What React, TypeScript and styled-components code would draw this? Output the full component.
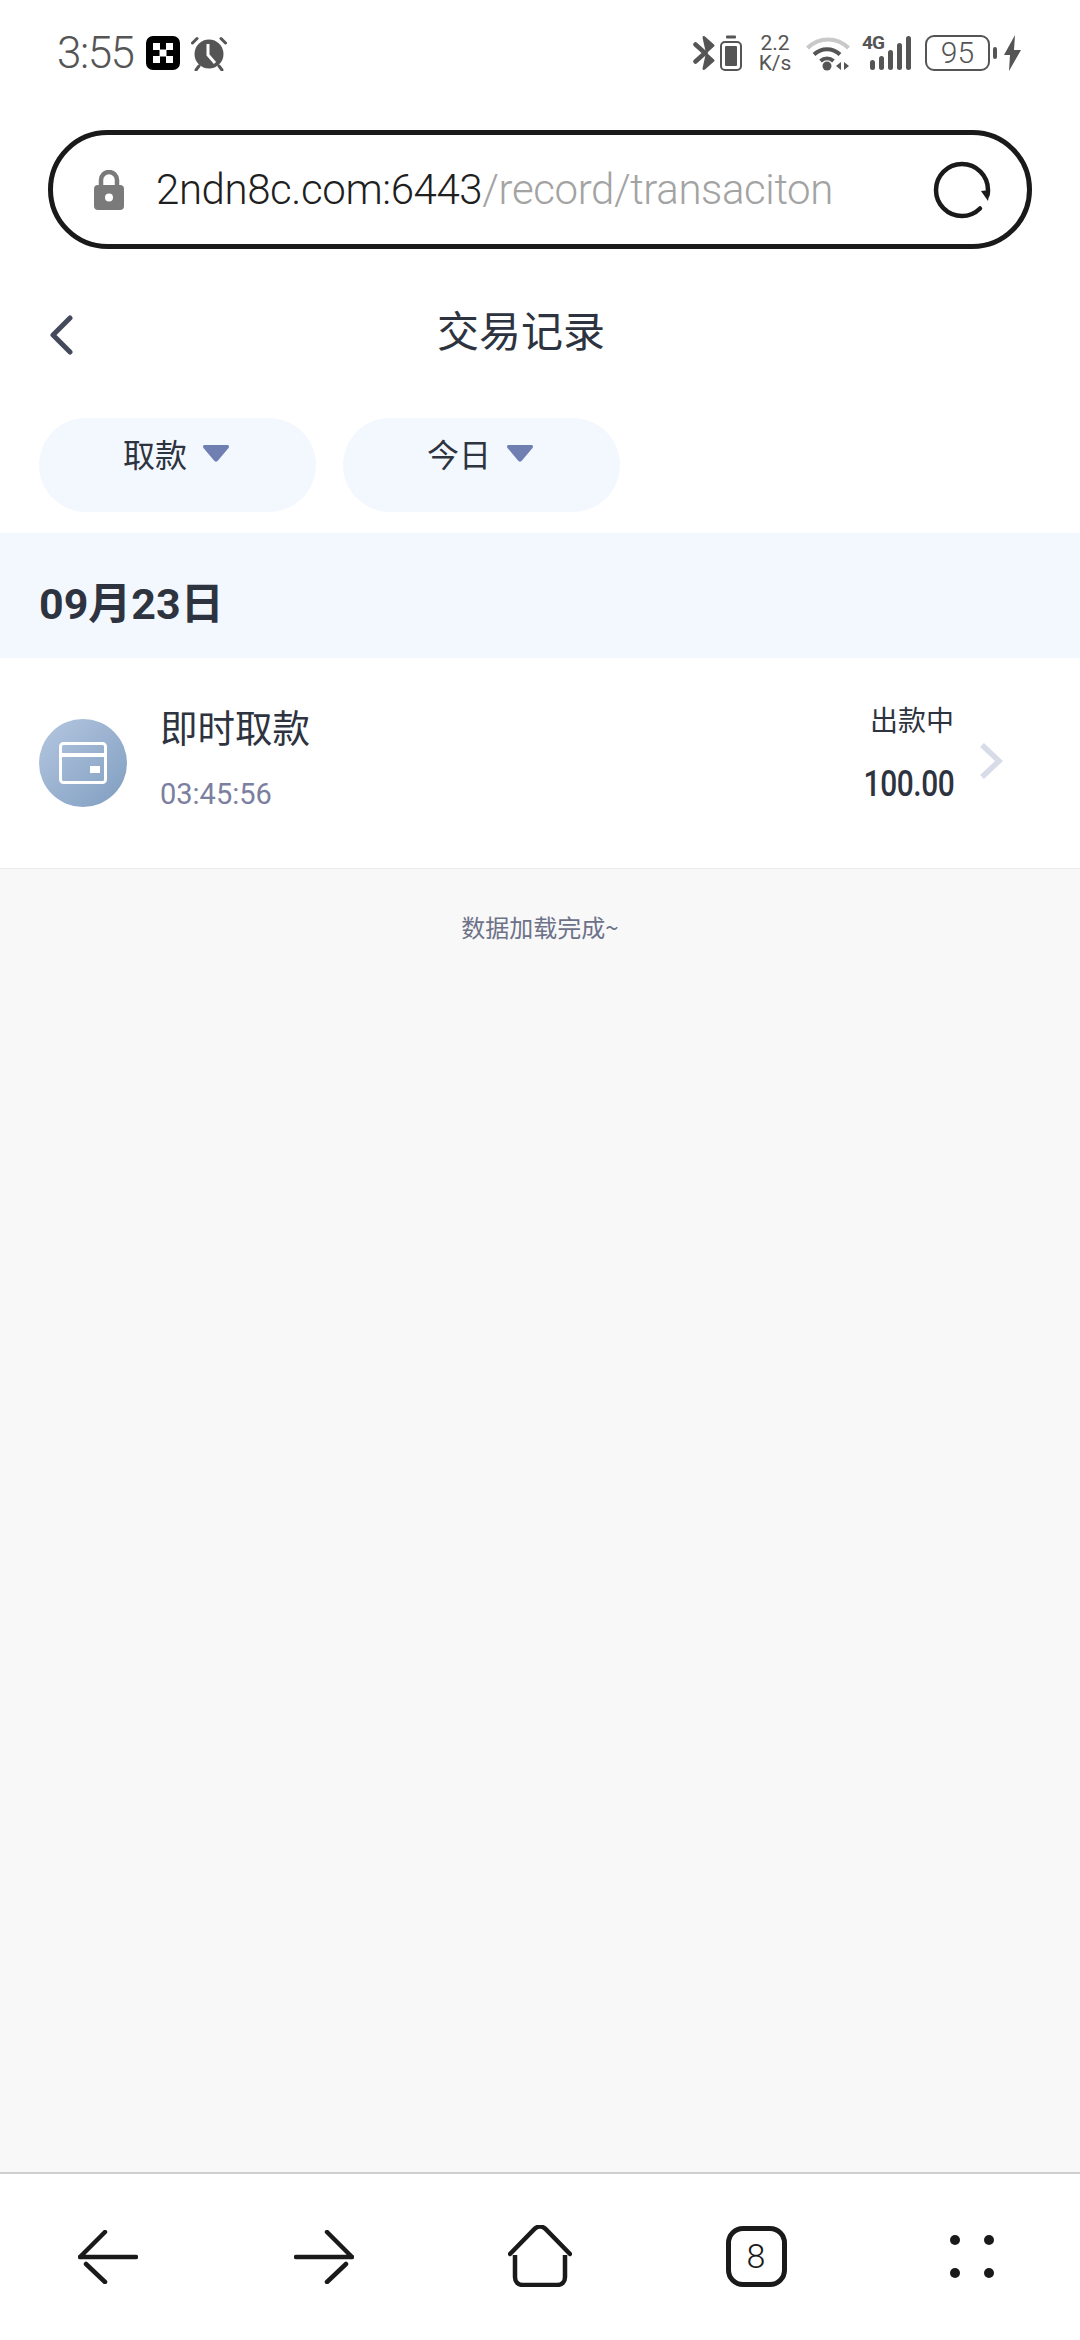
import React from 'react';
import styled, { createGlobalStyle } from 'styled-components';

const GlobalStyle = createGlobalStyle`
  html, body {
    margin: 0;
    padding: 0;
    background: #ffffff;
  }
  * {
    box-sizing: border-box;
  }
`;

const SANS = `Roboto, "Noto Sans CJK SC", sans-serif`;
const CJK = `"Noto Sans CJK SC", Roboto, sans-serif`;
const INK = '#2e3340';
const BAND = '#f3f8fe';

const Page = styled.div`
  width: 1080px;
  height: 2340px;
  display: flex;
  flex-direction: column;
  background: #ffffff;
  font-family: ${SANS};
  overflow: hidden;
`;

/* status bar */
const StatusBar = styled.div`
  height: 130px;
  padding: 0 59px 24px 57px;
  display: flex;
  align-items: center;
  justify-content: space-between;
  color: #555555;
`;

const StatusGroup = styled.div`
  display: flex;
  align-items: center;
`;

const Clock = styled.span`
  font-size: 44px;
  font-weight: 300;
  letter-spacing: -1.5px;
  line-height: 44px;
  margin-right: 13px;
`;

const Speed = styled.div`
  width: 36px;
  margin: 0 13px 0 15px;
  font-size: 21px;
  line-height: 20px;
  font-weight: 400;
  text-align: center;
  white-space: nowrap;
`;

const SignalBox = styled.div`
  position: relative;
  width: 50px;
  height: 36px;
  margin-left: 12px;
`;

const NetworkLabel = styled.span`
  position: absolute;
  left: 0;
  top: -3px;
  font-size: 19px;
  line-height: 22px;
  font-weight: 700;
  letter-spacing: -1px;
`;

const BatteryBox = styled.div`
  width: 65px;
  height: 36px;
  margin-left: 13px;
  border: 2.5px solid #555555;
  border-radius: 9px;
  display: flex;
  align-items: center;
  justify-content: center;
  font-size: 30px;
  font-weight: 300;
  line-height: 30px;
`;

const BatteryNub = styled.div`
  width: 4px;
  height: 12px;
  margin-left: 3px;
  border-radius: 2px;
  background: #555555;
`;

/* address bar */
const AddressBar = styled.div`
  height: 119px;
  margin: 0 48px 0 48px;
  padding: 0 35px 0 41px;
  border: 5px solid #1a1a1a;
  border-radius: 60px;
  display: flex;
  align-items: center;
`;

const Url = styled.div`
  flex: 1;
  margin-left: 32px;
  font-size: 42px;
  font-weight: 300;
  color: #1f1f1f;
  white-space: nowrap;
  line-height: 50px;
  letter-spacing: -0.4px;
`;

const UrlPath = styled.span`
  color: #a3a3a3;
`;

/* page header */
const TitleBar = styled.div`
  height: 169px;
  padding: 0 0 0 49px;
  display: flex;
  align-items: center;
  gap: 364px;
`;

const BackSlot = styled.div`
  display: flex;
  margin-top: 3px;
`;

const Title = styled.h1`
  margin: 0 0 10px;
  font-family: ${CJK};
  font-size: 42px;
  line-height: 50px;
  font-weight: 400;
  color: ${INK};
`;

const Filters = styled.div`
  display: flex;
  gap: 27px;
  padding: 0 0 0 39px;
  margin-bottom: 21px;
`;

const Pill = styled.div`
  width: 277px;
  height: 94px;
  border-radius: 47px;
  background: ${BAND};
  padding: 12px 3px 0 0;
  display: flex;
  align-items: flex-start;
  justify-content: center;
  gap: 16px;
  font-family: ${CJK};
  font-size: 32px;
  line-height: 46px;
  color: ${INK};
`;

const Caret = styled.svg`
  width: 26px;
  height: 17px;
  margin-top: 15px;
`;

const DateBand = styled.div`
  height: 125px;
  padding: 9px 0 0 39px;
  display: flex;
  align-items: center;
  background: ${BAND};
  font-family: ${SANS};
  font-size: 43px;
  font-weight: 700;
  color: ${INK};
`;

/* record row */
const Row = styled.div`
  height: 211px;
  padding: 0 77px 0 39px;
  display: flex;
  align-items: center;
  background: #ffffff;
  border-bottom: 1px solid #ececee;
`;

const Badge = styled.div`
  width: 88px;
  height: 88px;
  border-radius: 50%;
  margin-right: 33px;
  display: flex;
  align-items: center;
  justify-content: center;
  background: linear-gradient(135deg, #b5c7e0 0%, #7f9dc0 100%);
`;

const RowMain = styled.div`
  flex: 1;
  display: flex;
  flex-direction: column;
  gap: 26px;
  margin-bottom: 14px;
`;

const RowTitle = styled.div`
  font-family: ${CJK};
  font-size: 37.5px;
  line-height: 50px;
  color: ${INK};
`;

const RowTime = styled.div`
  font-size: 29px;
  line-height: 34px;
  color: #7b80a0;
`;

const RowSide = styled.div`
  display: flex;
  flex-direction: column;
  align-items: flex-end;
  gap: 25px;
  margin: 0 25px 24px 0;
`;

const RowStatus = styled.div`
  font-family: ${CJK};
  font-size: 28px;
  line-height: 40px;
  color: ${INK};
`;

const RowAmount = styled.div`
  font-size: 36px;
  line-height: 40px;
  font-weight: 500;
  letter-spacing: -0.5px;
  color: ${INK};
  transform: scaleX(0.83);
  transform-origin: right center;
`;

const RowChevron = styled.div`
  display: flex;
  margin-top: -4px;
`;

/* lower part */
const Content = styled.div`
  flex: 1;
  background: #f8f8f9;
  padding-top: 40px;
  text-align: center;
  font-family: ${CJK};
  font-size: 24px;
  line-height: 36px;
  color: #6d7288;
`;

const BottomNav = styled.div`
  height: 168px;
  display: grid;
  grid-template-columns: repeat(5, 1fr);
  align-items: center;
  justify-items: center;
  padding-bottom: 2px;
  background: #ffffff;
  border-top: 2px solid #cfcfcf;
`;

const TabCount = styled.div`
  width: 61px;
  height: 61px;
  border: 5px solid #1a1a1a;
  border-radius: 17px;
  display: flex;
  align-items: center;
  justify-content: center;
  font-size: 34px;
  font-weight: 300;
  color: #1a1a1a;
`;

const NavDots = styled.div`
  display: grid;
  grid-template-columns: repeat(2, 10px);
  gap: 23px 24px;
`;

const NavDot = styled.span`
  width: 10px;
  height: 10px;
  border-radius: 50%;
  background: #1a1a1a;
`;

const DiceIcon = () => (
  <svg width="34" height="34" viewBox="0 0 34 34" style={{ marginRight: 11 }}>
    <rect width="34" height="34" rx="7" fill="#000" />
    <g fill="#fff">
      <rect x="7" y="7" width="7" height="7" />
      <rect x="20" y="7" width="7" height="7" />
      <rect x="13.5" y="13.5" width="7" height="7" />
      <rect x="7" y="20" width="7" height="7" />
      <rect x="20" y="20" width="7" height="7" />
    </g>
  </svg>
);

const AlarmIcon = () => (
  <svg width="36" height="36" viewBox="0 0 36 36">
    <circle cx="18" cy="19" r="14.5" fill="#555" />
    <path d="M6 3.5 1.5 8M30 3.5 34.500 8M5 35l3-4M31 35l-3-4" stroke="#555" strokeWidth="3" strokeLinecap="round" />
    <path d="M17 9v11l7 8" fill="none" stroke="#fff" strokeWidth="3" />
  </svg>
);

const BluetoothIcon = () => (
  <svg width="23" height="36" viewBox="0 0 23 36">
    <path d="M2.500 9.500 12 18l-9.500 8.500" fill="none" stroke="#555" strokeWidth="4.500" strokeLinecap="round" />
    <path d="M11 2.500 20 10.500 14 16zM14 20l6 5.500-9 8z" fill="#555" stroke="#555" strokeWidth="3" strokeLinejoin="round" />
  </svg>
);

const PowerSaveIcon = () => (
  <svg width="22" height="36" viewBox="0 0 22 36" style={{ marginLeft: 4 }}>
    <rect x="6" y="0.500" width="10" height="3" rx="1" fill="#555" />
    <rect x="1" y="7" width="20" height="28" rx="4" fill="none" stroke="#555" strokeWidth="2" />
    <rect x="5" y="11" width="12" height="20" rx="1" fill="#555" />
  </svg>
);

const WifiIcon = () => (
  <svg width="44" height="36" viewBox="0 0 44 36">
    <path d="M1.500 13C13 1.500 31 1.500 42.500 13" fill="none" stroke="#c9c9c9" strokeWidth="4" />
    <path d="M8 19.500C15.500 12.500 26.500 12.500 34 19.500M14.500 26c4-3.500 9-3.500 13 0" fill="none" stroke="#555" strokeWidth="4" />
    <circle cx="21" cy="31" r="4.500" fill="#555" />
    <path d="M35 27v8l-5-4zM38 27v8l5-4z" fill="#555" />
  </svg>
);

const SignalBars = () => (
  <svg width="50" height="36" viewBox="0 0 50 36">
    <g fill="#555">
      <rect x="8" y="25" width="5" height="10" rx="2.500" />
      <rect x="17" y="21" width="5" height="14" rx="2.500" />
      <rect x="26" y="15" width="5" height="20" rx="2.500" />
      <rect x="35" y="8" width="5" height="27" rx="2.500" />
      <rect x="44" y="1" width="5" height="34" rx="2.500" />
    </g>
  </svg>
);

const BoltIcon = () => (
  <svg width="17" height="36" viewBox="0 0 17 36" style={{ marginLeft: 7 }}>
    <path d="M11 0 0 20h6l-1 16L17 15h-7z" fill="#555" />
  </svg>
);

const LockIcon = () => (
  <svg width="30" height="40" viewBox="0 0 30 40">
    <path d="M7 18v-8a8 8 0 0 1 16 0v8" fill="none" stroke="#7a7a7a" strokeWidth="4.500" />
    <rect y="15" width="30" height="25" rx="4" fill="#7a7a7a" />
    <circle cx="15" cy="27.500" r="4" fill="#fff" />
  </svg>
);

const ReloadIcon = () => (
  <svg width="60" height="60" viewBox="0 0 60 60">
    <path d="M48 48.500C43 53.500 37 56 30 56 15.600 56 4 44.400 4 30S15.600 4 30 4s26 11.600 26 26c0 2-.2 3.500-.5 5" fill="none" stroke="#1a1a1a" strokeWidth="4.500" strokeLinecap="round" />
    <path d="M49 31l9-1-2 11z" fill="#1a1a1a" />
  </svg>
);

const BackIcon = () => (
  <svg width="24" height="40" viewBox="0 0 24 40">
    <path d="M21 3 4 20l17 17" fill="none" stroke="#444a5c" strokeWidth="5" strokeLinecap="round" strokeLinejoin="round" />
  </svg>
);

const CardIcon = () => (
  <svg width="48" height="42" viewBox="0 0 48 42">
    <rect x="1.500" y="1.500" width="45" height="39" rx="3" fill="none" stroke="#fff" strokeWidth="3" />
    <rect x="2" y="11" width="44" height="4" fill="#fff" />
    <rect x="31" y="24" width="10" height="7" fill="#fff" />
  </svg>
);

const ChevronIcon = () => (
  <svg width="24" height="38" viewBox="0 0 24 38">
    <path d="M3 3l17 16L3 35" fill="none" stroke="#d8dbe8" strokeWidth="5.500" />
  </svg>
);

const NavArrow = ({ flip }: { flip?: boolean }) => (
  <svg width="60" height="54" viewBox="0 0 60 54" style={{ transform: flip ? 'scaleX(-1)' : undefined, marginTop: 2 }}>
    <path d="M2 27H58M27 2 2 27M8 34l19 18" fill="none" stroke="#1a1a1a" strokeWidth="4.500" strokeLinecap="round" />
  </svg>
);

const HomeIcon = () => (
  <svg width="64" height="62" viewBox="0 0 64 62">
    <path d="M2 29 27 3.500c3-2.500 7-2.500 10 0L62 29" fill="none" stroke="#1a1a1a" strokeWidth="4.500" strokeLinecap="round" />
    <path d="M7 30v22c0 5 3 8 8 8h34c5 0 8-3 8-8V30" fill="none" stroke="#1a1a1a" strokeWidth="4.500" />
  </svg>
);

const FILTERS = ['取款', '今日'];

const App: React.FC = () => {
  return (
    <Page>
      <GlobalStyle />
      <StatusBar>
        <StatusGroup>
          <Clock>3:55</Clock>
          <DiceIcon />
          <AlarmIcon />
        </StatusGroup>
        <StatusGroup>
          <BluetoothIcon />
          <PowerSaveIcon />
          <Speed>
            2.2
            <br />
            K/s
          </Speed>
          <WifiIcon />
          <SignalBox>
            <SignalBars />
            <NetworkLabel>4G</NetworkLabel>
          </SignalBox>
          <BatteryBox>95</BatteryBox>
          <BatteryNub />
          <BoltIcon />
        </StatusGroup>
      </StatusBar>

      <AddressBar>
        <LockIcon />
        <Url>
          2ndn8c.com:6443<UrlPath>/record/transaciton</UrlPath>
        </Url>
        <ReloadIcon />
      </AddressBar>

      <TitleBar>
        <BackSlot>
          <BackIcon />
        </BackSlot>
        <Title>交易记录</Title>
      </TitleBar>

      <Filters>
        {FILTERS.map((label) => (
          <Pill key={label}>
            {label}
            <Caret viewBox="0 0 26 17">
              <path d="M2 0h22c2 0 2.500 1.500 1.500 3L15 15.500c-1 1.500-3 1.500-4 0L.5 3C-.5 1.500 0 0 2 0z" fill="#6f7fb2" />
            </Caret>
          </Pill>
        ))}
      </Filters>

      <DateBand>09月23日</DateBand>

      <Row>
        <Badge>
          <CardIcon />
        </Badge>
        <RowMain>
          <RowTitle>即时取款</RowTitle>
          <RowTime>03:45:56</RowTime>
        </RowMain>
        <RowSide>
          <RowStatus>出款中</RowStatus>
          <RowAmount>100.00</RowAmount>
        </RowSide>
        <RowChevron>
          <ChevronIcon />
        </RowChevron>
      </Row>

      <Content>数据加载完成~</Content>

      <BottomNav>
        <NavArrow />
        <NavArrow flip />
        <HomeIcon />
        <TabCount>8</TabCount>
        <NavDots>
          <NavDot />
          <NavDot />
          <NavDot />
          <NavDot />
        </NavDots>
      </BottomNav>
    </Page>
  );
};

export default App;
